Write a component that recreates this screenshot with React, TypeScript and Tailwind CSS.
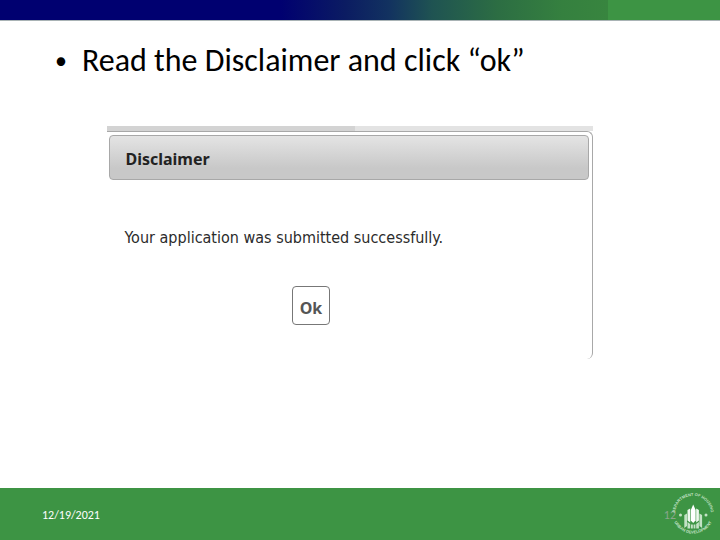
function TopBanner() {
  return (
    <header className="h-[21px] border-b border-[#a9b3b5] bg-[linear-gradient(90deg,#000070_0%,#000070_39%,#0b1c62_48%,#123260_54%,#1f5352_60%,#2c6d43_69%,#35803f_78%,#38853f_84.4%,#3d9444_84.5%,#3d9444_100%)]"></header>
  );
}

function Disclaimer() {
  return (
    <section
      aria-labelledby="disclaimer-title"
      className="mx-auto w-[69.3%] font-['DejaVu_Sans_Condensed','DejaVu_Sans',sans-serif] text-[#2b2b2b]"
    >
      <div className="flex h-[5px]">
        <div className="w-[51%] bg-[#d3d3d3]"></div>
        <div className="flex-1 bg-[#e3e3e3]"></div>
      </div>
      <div className="rounded-r-md border-t border-r border-[#a8a8a8] pt-[3px] pr-[3px] pl-[2px]">
        <h2
          id="disclaimer-title"
          className="flex h-[45px] items-center rounded-[4px] border border-[#a8a8a8] bg-linear-to-b from-[#e4e4e4] to-[#c8c8c8] to-75% px-[15px] pt-[2px] font-['Noto_Sans',sans-serif] text-[16px] font-bold text-[#222]"
        >
          Disclaimer
        </h2>
        <p className="px-[15px] pt-[46px] text-[16px] leading-6">
          Your application was submitted successfully.
        </p>
        <div className="flex justify-center pt-9 pr-[76px] pb-[34px]">
          <button
            type="button"
            className="h-[39px] w-[38px] rounded-[4px] border border-[#777] pt-1 font-['Noto_Sans',sans-serif] text-[16px] font-bold text-[#555]"
          >
            Ok
          </button>
        </div>
      </div>
    </section>
  );
}

function Seal() {
  return (
    <svg viewBox="0 0 50 50" className="size-[50px] text-[#c4e2c6]" aria-hidden="true">
      <defs>
        <path id="ring-top" d="M 8.500 31 A 18 18 0 1 1 41.500 31" />
        <path id="ring-bottom" d="M 5 29 A 21 21 0 0 0 45 29" />
      </defs>
      <g fill="currentColor" className="font-['Liberation_Sans',sans-serif] text-[4px] font-bold">
        <text>
          <textPath href="#ring-top" startOffset="50%" textAnchor="middle">
            DEPARTMENT OF HOUSING
          </textPath>
        </text>
        <text>
          <textPath href="#ring-bottom" startOffset="50%" textAnchor="middle">
            URBAN DEVELOPMENT
          </textPath>
        </text>
        <circle cx="12.500" cy="25" r="1.500" />
        <circle cx="38" cy="25" r="1.500" />
        <path d="M22.800 20 L25.200 14.500 L27.600 20 V30.500 L25.200 33 L22.800 30.500 Z" fill="#fff" />
        <path d="M19.500 20 L22.200 18.500 V32.500 L19.500 30.500 Z M30.900 20 L28.200 18.500 V32.500 L30.900 30.500 Z" fill="#eef8ee" />
        <path d="M16.300 25 L19 23.500 V36 L16.300 38 Z M34.100 25 L31.400 23.500 V36 L34.100 38 Z" />
        <path d="M19.500 32 L22.200 34 V38.500 H19.500 Z M30.900 32 L28.200 34 V38.500 H30.900 Z M23 34.500 H24.800 V38.500 H23 Z M25.600 34.500 H27.400 V38.500 H25.600 Z" />
      </g>
    </svg>
  );
}

export default function App() {
  return (
    <div className="flex min-h-screen flex-col bg-white font-[Carlito,Lato,sans-serif]">
      <TopBanner />
      <main className="flex-1 pt-5">
        <ul className="pl-[55px] text-[32px] leading-10 text-black">
          <li className="flex gap-[15px]">
            <span aria-hidden="true" className="text-2xl leading-10">
              •
            </span>
            <h1>Read the Disclaimer and click “ok”</h1>
          </li>
        </ul>
        <div className="pt-[45px] pr-5">
          <Disclaimer />
        </div>
      </main>
      <footer className="flex h-[52px] items-center justify-between bg-[#3d9444] pt-[2px] pr-[2px] pl-[42px] text-[12px] text-white">
        <time dateTime="2021-12-19">12/19/2021</time>
        <div className="flex items-center">
          <span className="-mr-2 text-[#8aa58c]">12</span>
          <Seal />
        </div>
      </footer>
    </div>
  );
}
